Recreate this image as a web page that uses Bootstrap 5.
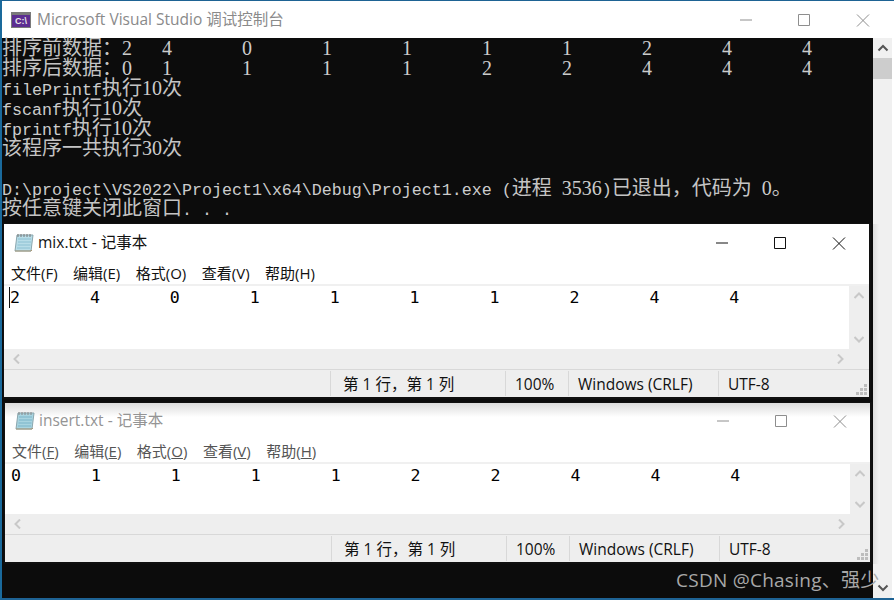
<!doctype html>
<html lang="zh"><head><meta charset="utf-8"><title>Console</title>
<link href="https://cdn.jsdelivr.net/npm/bootstrap@5.3.0/dist/css/bootstrap.min.css" rel="stylesheet">
<style>
html,body{margin:0;width:894px;height:600px;overflow:hidden;background:#fff}
.desk{position:relative;width:894px;height:600px;overflow:hidden;background:#fff;border-top:1px solid #1e6394;border-bottom:2px solid #1e6394;border-left:2px solid #1a6a9c}
.con-title{height:37px;padding-left:9px;color:#8a8a8a;font:15.5px/37px "Open Sans","Noto Sans CJK SC",sans-serif}
.con-title svg.appicon{margin-right:6px}
.ctrl{margin-left:auto}
.con-body{height:560px}
.con-text{width:871px;background:#0c0c0c;color:#c4c4c4;font:20px/18px "Noto Sans CJK SC",sans-serif;tab-size:80px}
.ln{height:20px;white-space:pre}
.mn{font:16.667px/18px "Liberation Mono",monospace;color:#ccc}
.dg{font:20px/18px "Liberation Serif",serif;color:#ccc}
.vbar{width:19px;background:#f0f0f0;position:relative;display:flex;flex-direction:column;align-items:center}
.thumb{width:19px;height:21px;background:#cdcdcd;margin-top:0}
.arrow-top{height:20px;display:flex;align-items:center;justify-content:center}
.np{position:absolute;background:#fff;border:1px solid #101010;font-family:"Open Sans","Noto Sans CJK SC",sans-serif;color:#111}
.np1{left:1px;top:222px;width:868px;height:176px;border-width:1px 2px 2px 1px}
.np2{left:2px;top:401px;width:868px;height:162px;border-width:1px 2px 2px 1px}
.np-title{height:41px;padding-left:10px;padding-bottom:4px;font-size:15.5px;flex:none}
.np2 .np-title{height:40px;color:#949494;background:linear-gradient(#dcdcdc,#fff 14px)}
.np-menu{height:19px;padding-left:7px;font-size:15px;line-height:17px;column-gap:15.5px;flex:none}
.np2 .np-menu{color:#555}
.np-menu u{text-underline-offset:1px}
.np-mid{background:#f0f0f0;padding-top:2px;flex:1 1 0;min-height:0}
.np-edit{background:#fff;font:16.6px/24px "DejaVu Sans Mono",monospace;white-space:pre;padding:0 0 0 6px;position:relative;flex:1 1 0;color:#000}
.caret-bar{position:absolute;left:5px;top:1px;width:1px;height:21px;background:#111}
.np-v{width:20px;background:#eee;display:flex;flex-direction:column;justify-content:space-between;align-items:center;padding:6px 0}
.np-h{height:20px;background:#eee;padding:0 9px;flex:none}
.np-status{height:28px;flex:none;background:#eee;border-top:1px solid #d8d8d8;font-size:15.5px;position:relative}
.cell{border-left:1px solid #d8d8d8;height:25px;margin-top:1px;padding-left:9px;line-height:26px;white-space:nowrap}
.c1{margin-left:326px;width:175px;padding-left:12px}.c2{width:63px}.c3{width:150px}
.grip{position:absolute;right:1px;bottom:1px}
.wm{position:absolute;left:674px;top:566px;color:#a8a8a8;font:19px/26px "Open Sans","Noto Sans CJK SC",sans-serif;letter-spacing:.25px;white-space:nowrap}
.vtop{position:absolute;right:0;bottom:0;width:19px;height:20px;display:flex;align-items:center;justify-content:center}
.shade{position:absolute;left:871px;top:223px;width:6px;height:340px;background:linear-gradient(90deg,#ddd,#f0f0f0)}
</style></head><body>
<div class="desk">
  <div class="con-title d-flex align-items-center">
    <svg class="appicon" width="20" height="16" viewBox="0 0 20 16"><rect width="20" height="16" fill="#7a7a7a"/><rect x="1" y="3" width="18" height="12" fill="#5c2d91"/><text x="10" y="12" text-anchor="middle" font-size="9" font-weight="700" font-family="Liberation Sans" fill="#e8e8e8">C:\</text></svg>
    <span>Microsoft Visual Studio 调试控制台</span>
    <svg class="ctrl" width="135" height="16" viewBox="0 0 135 16"><g fill="none" stroke="#8e8e8e"><path d="M0 8H12"/><path d="M58.500 2.500h11v11h-11z" /><path d="M117 2.500L129 14.500M129 2.500L117 14.500"/></g></svg><span style="width:19px"></span>
  </div>
  <div class="d-flex con-body">
<div class="con-text">
<div class="ln">排序前数据&#xFF1A;<span class="dg">2	4	0	1	1	1	1	2	4	4</span></div>
<div class="ln">排序后数据&#xFF1A;<span class="dg">0	1	1	1	1	2	2	4	4	4</span></div>
<div class="ln"><span class="mn">filePrintf</span>执行<span class="dg">10</span>次</div>
<div class="ln"><span class="mn">fscanf</span>执行<span class="dg">10</span>次</div>
<div class="ln"><span class="mn">fprintf</span>执行<span class="dg">10</span>次</div>
<div class="ln">该程序一共执行<span class="dg">30</span>次</div>
<div class="ln"></div>
<div class="ln"><span class="mn">D:\project\VS2022\Project1\x64\Debug\Project1.exe (</span>进程<span class="mn"> </span><span class="dg">3536</span><span class="mn">)</span>已退出&#xFF0C;代码为<span class="mn"> </span><span class="dg">0</span>。</div>
<div class="ln">按任意键关闭此窗口<span class="mn">. . .</span></div>
</div>
    <div class="vbar">
      <div class="arrow-top"><svg width="12" height="8" viewBox="0 0 12 8"><path d="M1.500 6.500L6 2l4.500 4.500" fill="none" stroke="#555" stroke-width="2"/></svg></div>
      <div class="thumb"></div>
      <div class="vtop"><svg width="12" height="8" viewBox="0 0 12 8"><path d="M1.500 1.500L6 6l4.500-4.500" fill="none" stroke="#555" stroke-width="2"/></svg></div>
    </div>
  </div>
  <div class="shade"></div>

  <div class="np np1 d-flex flex-column">
    <div class="np-title d-flex align-items-center">
      <svg width="20" height="20" viewBox="0 0 20 20" class="me-1"><path d="M3 2h16l-2 16H1z" fill="#b8dde8" stroke="#8aa6ae"/><path d="M4 6h13M4 9h13M3.500 12h13M3 15h13" stroke="#8cc0d2"/><path d="M4 1v3M7 1v3M10 1v3M13 1v3M16 1v3" stroke="#777"/><path d="M1 18h16l1-1" stroke="#a89878" fill="none"/></svg>
      <span>mix.txt - 记事本</span>
      <svg class="ctrl" width="135" height="16" viewBox="0 0 135 16"><g fill="none" stroke="#111"><path d="M0 8H12"/><path d="M58.500 2.500h11v11h-11z"/><path d="M117 2.500L129 14.500M129 2.500L117 14.500"/></g></svg><span style="width:18px"></span>
    </div>
    <div class="np-menu d-flex"><span>文件(F)</span><span>编辑(E)</span><span>格式(O)</span><span>查看(V)</span><span>帮助(H)</span></div>
    <div class="np-mid d-flex flex-column">
      <div class="d-flex flex-fill">
<div class="np-edit"><span class="caret-bar"></span>2       4       0       1       1       1       1       2       4       4</div>
        <div class="np-v"><svg width="10" height="7" viewBox="0 0 10 7"><path d="M.5 6L5 1.500 9.500 6" fill="none" stroke="#c8c8c8" stroke-width="2"/></svg><svg width="10" height="7" viewBox="0 0 10 7"><path d="M.5 1L5 5.500 9.500 1" fill="none" stroke="#c8c8c8" stroke-width="2"/></svg></div>
      </div>
      <div class="np-h d-flex align-items-center justify-content-between"><svg width="7" height="10" viewBox="0 0 7 10"><path d="M6 .5L1.500 5 6 9.500" fill="none" stroke="#c8c8c8" stroke-width="2"/></svg><svg width="7" height="10" viewBox="0 0 7 10" class="me-3"><path d="M1 .5L5.500 5 1 9.500" fill="none" stroke="#c8c8c8" stroke-width="2"/></svg></div>
      <div class="np-status d-flex"><div class="cell c1">第 1 行&#xFF0C;第 1 列</div><div class="cell c2">100%</div><div class="cell c3">Windows (CRLF)</div><div class="cell">UTF-8</div>
        <svg class="grip" width="12" height="12" viewBox="0 0 12 12"><path fill="#bdbdbd" d="M8 0h3v3H8zM4 4h3v3H4zM8 4h3v3H8zM0 8h3v3H0zM4 8h3v3H4zM8 8h3v3H8z"/></svg></div>
    </div>
  </div>

  <div class="np np2 d-flex flex-column">
    <div class="np-title d-flex align-items-center">
      <svg width="20" height="20" viewBox="0 0 20 20" class="me-1"><path d="M3 2h16l-2 16H1z" fill="#a8d4e0" stroke="#8aa6ae"/><path d="M4 6h13M4 9h13M3.500 12h13M3 15h13" stroke="#7ab4c8"/><path d="M4 1v3M7 1v3M10 1v3M13 1v3M16 1v3" stroke="#888"/><path d="M1 18h16l1-1" stroke="#a89878" fill="none"/></svg>
      <span>insert.txt - 记事本</span>
      <svg class="ctrl" width="135" height="16" viewBox="0 0 135 16"><g fill="none" stroke="#8e8e8e"><path d="M0 8H12"/><path d="M58.500 2.500h11v11h-11z"/><path d="M117 2.500L129 14.500M129 2.500L117 14.500"/></g></svg><span style="width:18px"></span>
    </div>
    <div class="np-menu d-flex"><span>文件(<u>F</u>)</span><span>编辑(<u>E</u>)</span><span>格式(<u>O</u>)</span><span>查看(<u>V</u>)</span><span>帮助(<u>H</u>)</span></div>
    <div class="np-mid d-flex flex-column">
      <div class="d-flex flex-fill">
<div class="np-edit">0       1       1       1       1       2       2       4       4       4</div>
        <div class="np-v"><svg width="10" height="7" viewBox="0 0 10 7"><path d="M.5 6L5 1.500 9.500 6" fill="none" stroke="#c8c8c8" stroke-width="2"/></svg><svg width="10" height="7" viewBox="0 0 10 7"><path d="M.5 1L5 5.500 9.500 1" fill="none" stroke="#c8c8c8" stroke-width="2"/></svg></div>
      </div>
      <div class="np-h d-flex align-items-center justify-content-between"><svg width="7" height="10" viewBox="0 0 7 10"><path d="M6 .5L1.500 5 6 9.500" fill="none" stroke="#c8c8c8" stroke-width="2"/></svg><svg width="7" height="10" viewBox="0 0 7 10" class="me-3"><path d="M1 .5L5.500 5 1 9.500" fill="none" stroke="#c8c8c8" stroke-width="2"/></svg></div>
      <div class="np-status d-flex"><div class="cell c1">第 1 行&#xFF0C;第 1 列</div><div class="cell c2">100%</div><div class="cell c3">Windows (CRLF)</div><div class="cell">UTF-8</div>
        <svg class="grip" width="12" height="12" viewBox="0 0 12 12"><path fill="#bdbdbd" d="M8 0h3v3H8zM4 4h3v3H4zM8 4h3v3H8zM0 8h3v3H0zM4 8h3v3H4zM8 8h3v3H8z"/></svg></div>
    </div>
  </div>
  <div class="wm">CSDN @Chasing、强少</div>
</div>
<script src="https://cdn.jsdelivr.net/npm/bootstrap@5.3.0/dist/js/bootstrap.bundle.min.js"></script>
</body></html>
